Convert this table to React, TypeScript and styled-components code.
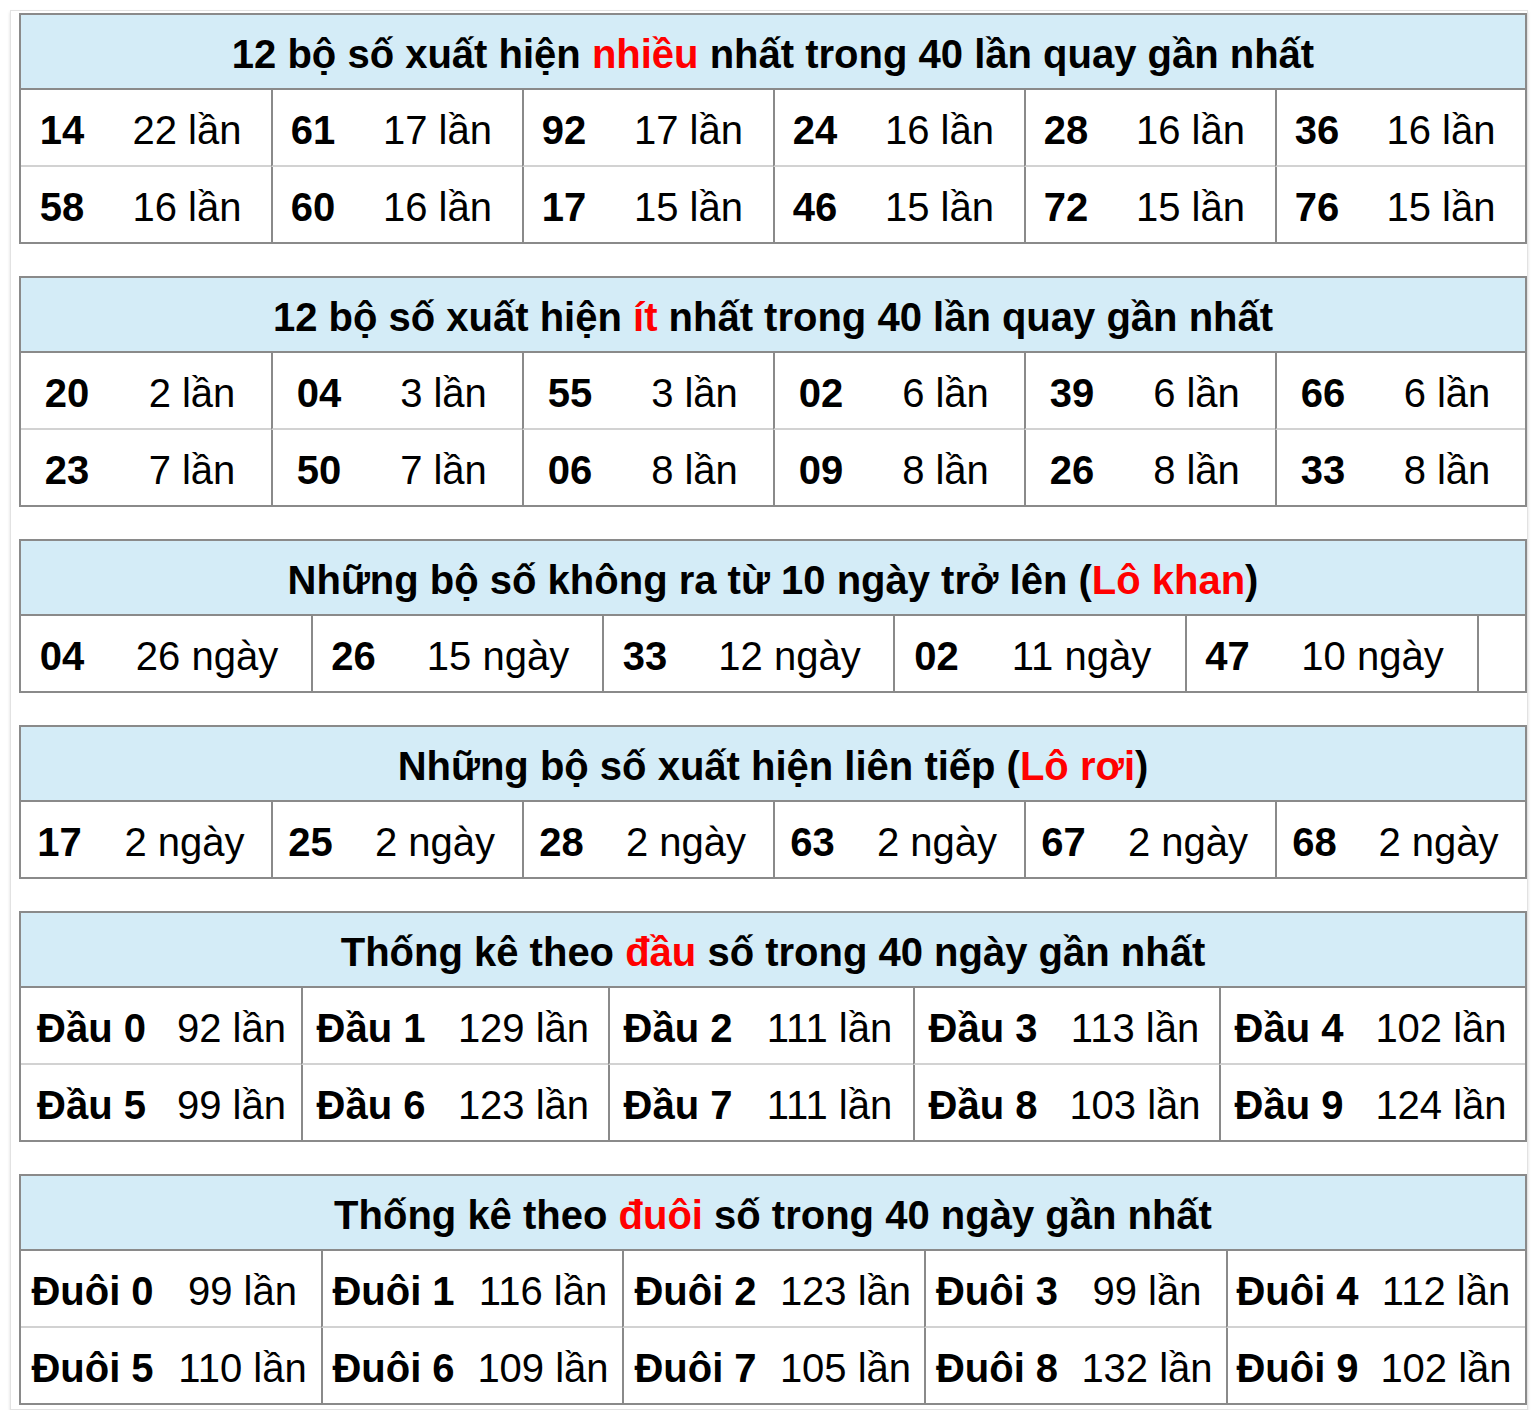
import styled, { createGlobalStyle } from "styled-components";

const GlobalStyle = createGlobalStyle`
  html, body {
    margin: 0;
    padding: 0;
    background: #fff;
  }
  body {
    font-family: "Liberation Sans", Arial, Helvetica, sans-serif;
    color: #000;
  }
`;

type Seg = string | { red: string };

interface StatTable {
  title: Seg[];
  cols: number[];
  rows: [string, string][][];
  tail?: boolean;
}

const tables: StatTable[] = [
  {
    title: ["12 bộ số xuất hiện ", { red: "nhiều" }, " nhất trong 40 lần quay gần nhất"],
    cols: [82, 168, 82, 169, 82, 169, 82, 169, 82, 169, 82, 168],
    rows: [
      [["14", "22 lần"], ["61", "17 lần"], ["92", "17 lần"], ["24", "16 lần"], ["28", "16 lần"], ["36", "16 lần"]],
      [["58", "16 lần"], ["60", "16 lần"], ["17", "15 lần"], ["46", "15 lần"], ["72", "15 lần"], ["76", "15 lần"]],
    ],
  },
  {
    title: ["12 bộ số xuất hiện ", { red: "ít" }, " nhất trong 40 lần quay gần nhất"],
    cols: [92, 158, 94, 157, 94, 157, 94, 157, 94, 157, 94, 156],
    rows: [
      [["20", "2 lần"], ["04", "3 lần"], ["55", "3 lần"], ["02", "6 lần"], ["39", "6 lần"], ["66", "6 lần"]],
      [["23", "7 lần"], ["50", "7 lần"], ["06", "8 lần"], ["09", "8 lần"], ["26", "8 lần"], ["33", "8 lần"]],
    ],
  },
  {
    title: ["Những bộ số không ra từ 10 ngày trở lên (", { red: "Lô khan" }, ")"],
    cols: [82, 208, 83, 208, 84, 207, 85, 207, 83, 209, 48],
    rows: [
      [["04", "26 ngày"], ["26", "15 ngày"], ["33", "12 ngày"], ["02", "11 ngày"], ["47", "10 ngày"]],
    ],
    tail: true,
  },
  {
    title: ["Những bộ số xuất hiện liên tiếp (", { red: "Lô rơi" }, ")"],
    cols: [77, 173, 77, 174, 77, 174, 77, 174, 77, 174, 77, 173],
    rows: [
      [["17", "2 ngày"], ["25", "2 ngày"], ["28", "2 ngày"], ["63", "2 ngày"], ["67", "2 ngày"], ["68", "2 ngày"]],
    ],
  },
  {
    title: ["Thống kê theo ", { red: "đầu" }, " số trong 40 ngày gần nhất"],
    cols: [141, 139, 138, 169, 138, 167, 138, 168, 138, 168],
    rows: [
      [["Đầu 0", "92 lần"], ["Đầu 1", "129 lần"], ["Đầu 2", "111 lần"], ["Đầu 3", "113 lần"], ["Đầu 4", "102 lần"]],
      [["Đầu 5", "99 lần"], ["Đầu 6", "123 lần"], ["Đầu 7", "111 lần"], ["Đầu 8", "103 lần"], ["Đầu 9", "124 lần"]],
    ],
  },
  {
    title: ["Thống kê theo ", { red: "đuôi" }, " số trong 40 ngày gần nhất"],
    cols: [143, 157, 143, 158, 145, 157, 144, 158, 141, 158],
    rows: [
      [["Đuôi 0", "99 lần"], ["Đuôi 1", "116 lần"], ["Đuôi 2", "123 lần"], ["Đuôi 3", "99 lần"], ["Đuôi 4", "112 lần"]],
      [["Đuôi 5", "110 lần"], ["Đuôi 6", "109 lần"], ["Đuôi 7", "105 lần"], ["Đuôi 8", "132 lần"], ["Đuôi 9", "102 lần"]],
    ],
  },
];

const Page = styled.div`
  box-sizing: border-box;
  width: 1518px;
  margin: 10px 0 0 10px;
  padding: 2px 0 4px 8px;
  border: 1px solid #e2e2e2;
  box-shadow: 0 2px 3px rgba(0, 0, 0, 0.14);
  display: flex;
  flex-direction: column;
  gap: 32px;
`;

const Table = styled.section`
  box-sizing: border-box;
  width: 1508px;
  border: 2px solid #8a8a8a;
`;

const Header = styled.h2`
  box-sizing: border-box;
  margin: 0;
  height: 75px;
  padding-top: 5px;
  display: flex;
  align-items: center;
  justify-content: center;
  background: #d4ecf7;
  border-bottom: 2px solid #8a8a8a;
  font-size: 40px;
  font-weight: 700;
  white-space: pre;
`;

const Red = styled.span`
  color: #ff0000;
`;

const Body = styled.div<{ $cols: string }>`
  display: grid;
  grid-template-columns: ${(p) => p.$cols};
`;

const Cell = styled.div<{ $bold?: boolean; $start?: boolean; $last?: boolean }>`
  box-sizing: border-box;
  height: ${(p) => (p.$last ? 75 : 77)}px;
  padding-top: 6px;
  display: flex;
  align-items: center;
  justify-content: center;
  border-left: ${(p) => (p.$start ? "2px solid #8a8a8a" : "none")};
  border-bottom: ${(p) => (p.$last ? "none" : "2px solid #d2d2d2")};
  font-size: 40px;
  font-weight: ${(p) => (p.$bold ? 700 : 400)};
  white-space: nowrap;
`;

const Title = ({ segs }: { segs: Seg[] }) => (
  <Header>
    <span>
      {segs.map((s, i) => (typeof s === "string" ? s : <Red key={i}>{s.red}</Red>))}
    </span>
  </Header>
);

export default function App() {
  return (
    <>
      <GlobalStyle />
      <Page>
        {tables.map((t, ti) => (
          <Table key={ti}>
            <Title segs={t.title} />
            <Body $cols={t.cols.map((c) => c + "px").join(" ")}>
              {t.rows.map((row, ri) => {
                const last = ri === t.rows.length - 1;
                return [
                  ...row.map(([num, val], gi) => [
                    <Cell key={`${ri}-${gi}-n`} $bold $start={gi > 0} $last={last}>
                      {num}
                    </Cell>,
                    <Cell key={`${ri}-${gi}-v`} $last={last}>
                      {val}
                    </Cell>,
                  ]),
                  t.tail ? <Cell key={`${ri}-tail`} $start $last={last} /> : null,
                ];
              })}
            </Body>
          </Table>
        ))}
      </Page>
    </>
  );
}
